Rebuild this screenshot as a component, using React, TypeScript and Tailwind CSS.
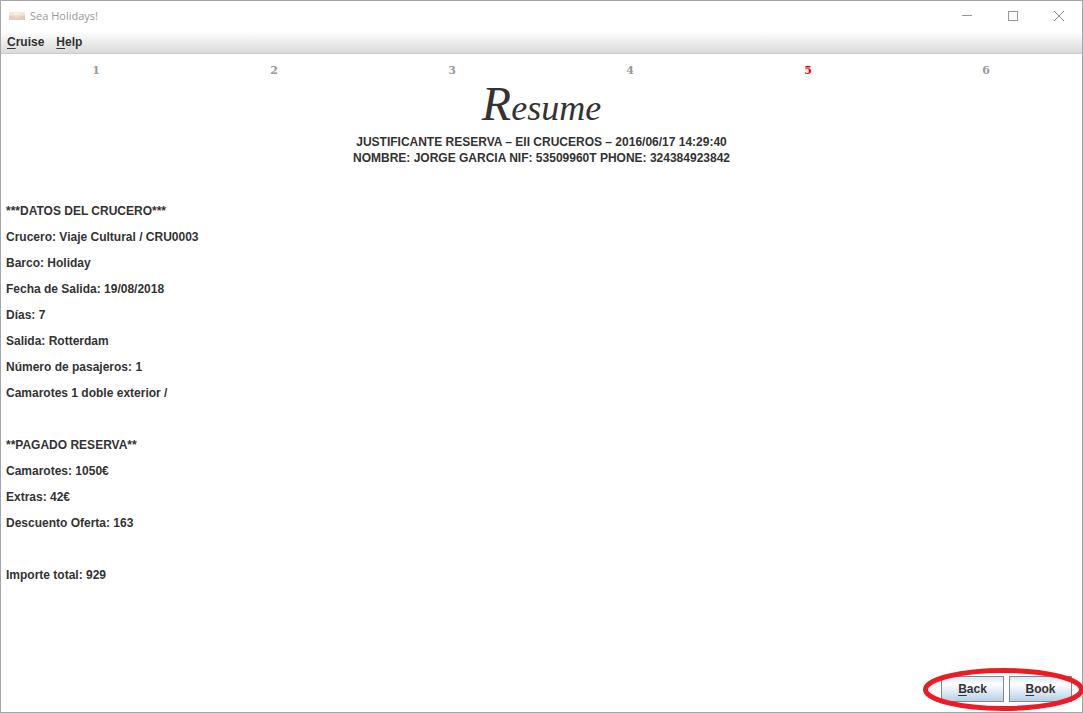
import React from "react";

const steps = [1, 2, 3, 4, 5, 6];
const currentStep = 5;

const cruise = [
  "***DATOS DEL CRUCERO***",
  "Crucero: Viaje Cultural / CRU0003",
  "Barco: Holiday",
  "Fecha de Salida: 19/08/2018",
  "Días: 7",
  "Salida: Rotterdam",
  "Número de pasajeros: 1",
  "Camarotes 1 doble exterior /",
];

const payment = [
  "**PAGADO RESERVA**",
  "Camarotes: 1050€",
  "Extras: 42€",
  "Descuento Oferta: 163",
];

function Mnemonic({ text }: { text: string }) {
  return (
    <span>
      <span className="underline underline-offset-2">{text[0]}</span>
      {text.slice(1)}
    </span>
  );
}

function TitleBar() {
  return (
    <header className="flex h-[30px] shrink-0 items-center bg-white pl-2">
      <svg className="mr-1 h-4 w-[17px]" viewBox="0 0 17 16" shapeRendering="crispEdges" aria-hidden="true">
        <defs>
          <linearGradient id="sunset" x1="0" y1="0" x2="0" y2="1">
            <stop offset="0" stopColor="#f0eae6" />
            <stop offset="0.5" stopColor="#efdccb" />
            <stop offset="1" stopColor="#dccabd" />
          </linearGradient>
        </defs>
        <rect x="0" y="4" width="16" height="8" fill="url(#sunset)" />
        <path d="M0 8h3v1h3v2H0zM12 8h4v3h-6V9h2z" fill="#e2cdbd" />
        <rect x="5" y="5" width="6" height="2" fill="#f9eee2" />
      </svg>
      <h1 className="flex-1 font-['Open_Sans',sans-serif] text-[11px] font-normal text-[#999]">Sea Holidays!</h1>
      <div className="flex h-full items-center">
        <button aria-label="Minimize" className="flex h-full w-[46px] items-center justify-center">
          <svg width="10" height="10" viewBox="0 0 10 10" shapeRendering="crispEdges">
            <path d="M0 4.5h10" stroke="#999" />
          </svg>
        </button>
        <button aria-label="Maximize" className="flex h-full w-[46px] items-center justify-center">
          <svg width="10" height="10" viewBox="0 0 10 10" shapeRendering="crispEdges">
            <rect x="0.5" y="0.5" width="9" height="9" fill="none" stroke="#999" />
          </svg>
        </button>
        <button aria-label="Close" className="flex h-full w-[46px] items-center justify-center">
          <svg width="10" height="10" viewBox="0 0 10 10">
            <path d="M0 0l10 10M10 0L0 10" stroke="#8c8c8c" />
          </svg>
        </button>
      </div>
    </header>
  );
}

function ActionButton({ text }: { text: string }) {
  return (
    <button className="flex h-[26px] w-[63px] items-center justify-center border border-[#7a8a99] bg-linear-to-b from-[#dde8f3] via-white via-30% to-[#b8cfe5] font-bold">
      <Mnemonic text={text} />
    </button>
  );
}

export default function App() {
  return (
    <div className="flex min-h-screen flex-col border border-[#a4a6aa] bg-white font-['Liberation_Sans',Arial,sans-serif] text-xs font-bold text-[#333]">
      <TitleBar />
      <nav className="flex h-[23px] shrink-0 items-center gap-3 border-b border-[#ccc] bg-linear-to-b from-white to-[#dadada] px-1.5">
        <button className="font-bold">
          <Mnemonic text="Cruise" />
        </button>
        <button className="font-bold">
          <Mnemonic text="Help" />
        </button>
      </nav>

      <main className="flex flex-1 flex-col px-[5px] pt-2">
        <ol className="grid grid-cols-6 pr-0.5 pl-px text-center font-['DejaVu_Serif',serif] text-[11px] leading-[18px] text-[#999]">
          {steps.map((step) => (
            <li
              key={step}
              aria-current={step === currentStep ? "step" : undefined}
              className={step === currentStep ? "text-[#f00000]" : ""}
            >
              {step}
            </li>
          ))}
        </ol>

        <h2 className="flex h-[54px] items-baseline justify-center font-['Liberation_Serif',serif] text-4xl leading-[48px] font-normal italic">
          <span>
            <span className="text-5xl leading-[48px]">R</span>esume
          </span>
        </h2>

        <div className="text-center leading-4">
          <p>JUSTIFICANTE RESERVA – EII CRUCEROS – 2016/06/17 14:29:40</p>
          <p>NOMBRE: JORGE GARCIA NIF: 53509960T PHONE: 324384923842</p>
        </div>

        <div className="mt-8 flex flex-1 flex-col gap-[26px] leading-[26px]">
          <section>
            {cruise.map((line) => (
              <p key={line}>{line}</p>
            ))}
          </section>
          <section>
            {payment.map((line) => (
              <p key={line}>{line}</p>
            ))}
          </section>
          <p>Importe total: 929</p>
        </div>

        <footer className="flex justify-end pr-[5px] pb-2.5">
          <div className="relative flex gap-[5px]">
            <ActionButton text="Back" />
            <ActionButton text="Book" />
            <svg
              className="pointer-events-none absolute -top-2 -right-3 h-[43px] w-[161px]"
              viewBox="0 0 161 43"
              aria-hidden="true"
            >
              <ellipse cx="80.5" cy="21.5" rx="78" ry="19" fill="none" stroke="#ed1c24" strokeWidth="5" />
            </svg>
          </div>
        </footer>
      </main>
    </div>
  );
}
